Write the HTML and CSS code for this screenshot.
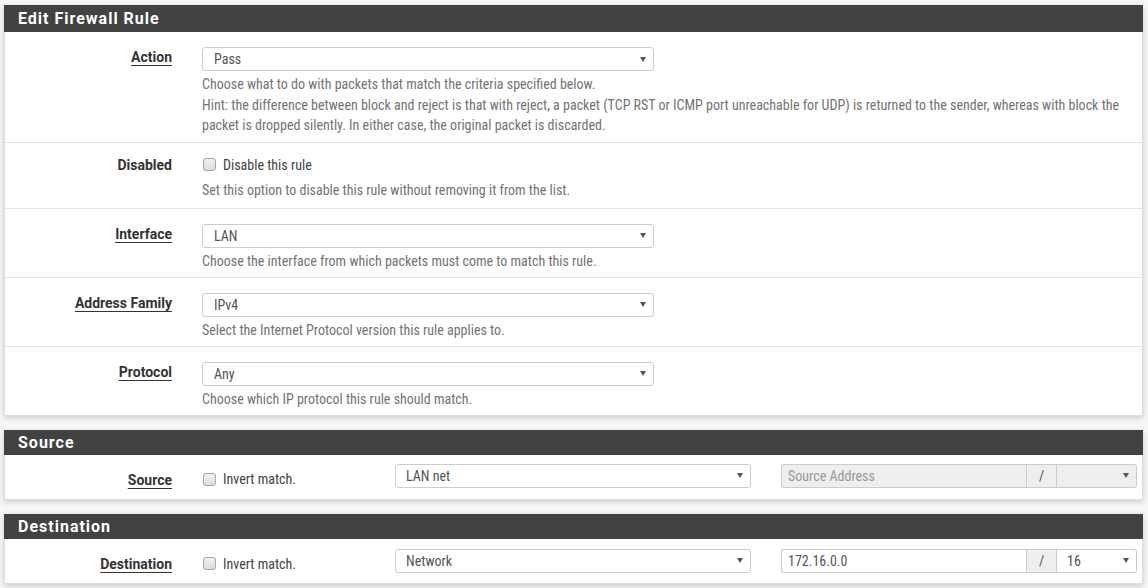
FILE: index.html
```html
<!DOCTYPE html>
<html>
<head>
<meta charset="utf-8">
<link rel="stylesheet" href="styles.css">
</head>
<body>
<div class="panel">
  <div class="panel-heading">Edit Firewall Rule</div>
  <div class="panel-body">
    <div class="row row-first">
      <div class="lbl"><span class="u">Action</span></div>
      <div class="ctl">
        <div class="sel wide"><span>Pass</span><svg class="caret" width="6" height="5" viewBox="0 0 6 5"><path d="M0 0 H6 L3 5 Z" fill="#555"/></svg></div>
        <div class="help l3">Choose what to do with packets that match the criteria specified below.<br>Hint: the difference between block and reject is that with reject, a packet (TCP RST or ICMP port unreachable for UDP) is returned to the sender, whereas with block the packet is dropped silently. In either case, the original packet is discarded.</div>
      </div>
    </div>
    <div class="row row-check">
      <div class="lbl"><span>Disabled</span></div>
      <div class="ctl">
        <div class="chk-line"><span class="cb"></span><span>Disable this rule</span></div>
        <div class="help">Set this option to disable this rule without removing it from the list.</div>
      </div>
    </div>
    <div class="row">
      <div class="lbl"><span class="u">Interface</span></div>
      <div class="ctl">
        <div class="sel wide"><span>LAN</span><svg class="caret" width="6" height="5" viewBox="0 0 6 5"><path d="M0 0 H6 L3 5 Z" fill="#555"/></svg></div>
        <div class="help">Choose the interface from which packets must come to match this rule.</div>
      </div>
    </div>
    <div class="row">
      <div class="lbl"><span class="u">Address Family</span></div>
      <div class="ctl">
        <div class="sel wide"><span>IPv4</span><svg class="caret" width="6" height="5" viewBox="0 0 6 5"><path d="M0 0 H6 L3 5 Z" fill="#555"/></svg></div>
        <div class="help">Select the Internet Protocol version this rule applies to.</div>
      </div>
    </div>
    <div class="row">
      <div class="lbl"><span class="u">Protocol</span></div>
      <div class="ctl">
        <div class="sel wide"><span>Any</span><svg class="caret" width="6" height="5" viewBox="0 0 6 5"><path d="M0 0 H6 L3 5 Z" fill="#555"/></svg></div>
        <div class="help">Choose which IP protocol this rule should match.</div>
      </div>
    </div>
  </div>
</div>

<div class="panel">
  <div class="panel-heading">Source</div>
  <div class="panel-body">
    <div class="row row-addr">
      <div class="lbl"><span class="u">Source</span></div>
      <div class="inv"><span class="cb"></span><span>Invert match.</span></div>
      <div class="sel mid"><span>LAN net</span><svg class="caret" width="6" height="5" viewBox="0 0 6 5"><path d="M0 0 H6 L3 5 Z" fill="#555"/></svg></div>
      <div class="igroup disabled">
        <div class="ig-input ph">Source Address</div>
        <div class="ig-addon">/</div>
        <div class="ig-sel"><span></span><svg class="caret" width="6" height="5" viewBox="0 0 6 5"><path d="M0 0 H6 L3 5 Z" fill="#555"/></svg></div>
      </div>
    </div>
  </div>
</div>

<div class="panel">
  <div class="panel-heading">Destination</div>
  <div class="panel-body">
    <div class="row row-addr row-dest">
      <div class="lbl"><span class="u">Destination</span></div>
      <div class="inv"><span class="cb"></span><span>Invert match.</span></div>
      <div class="sel mid"><span>Network</span><svg class="caret" width="6" height="5" viewBox="0 0 6 5"><path d="M0 0 H6 L3 5 Z" fill="#555"/></svg></div>
      <div class="igroup">
        <div class="ig-input">172.16.0.0</div>
        <div class="ig-addon">/</div>
        <div class="ig-sel"><span>16</span><svg class="caret" width="6" height="5" viewBox="0 0 6 5"><path d="M0 0 H6 L3 5 Z" fill="#555"/></svg></div>
      </div>
    </div>
  </div>
</div>
</body>
</html>
```

FILE: styles.css
```css
html, body {
  margin: 0;
  padding: 0;
}
body {
  background: #f7f7f7;
  padding: 5px 5px 0 4px;
  font-family: "Roboto Condensed", Roboto, "Liberation Sans", sans-serif;
  font-stretch: 80%;
  font-size: 14px;
  line-height: 20px;
  color: #333;
}
.panel {
  width: 1139px;
  background: #fff;
  border: 1px solid #ddd;
  border-top: 0;
  box-sizing: border-box;
  box-shadow: 0 2px 6px rgba(0, 0, 0, 0.18);
  margin-bottom: 14px;
}
.panel-heading {
  background: #424242;
  color: #fff;
  height: 27px;
  line-height: 27px;
  padding-left: 14px;
  margin: 0 -1px;
  font-family: Roboto, "Liberation Sans", sans-serif;
  font-stretch: 100%;
  font-weight: bold;
  font-size: 16px;
  letter-spacing: 1px;
}
.panel + .panel .panel-heading {
  height: 25px;
  line-height: 25px;
}
.row {
  display: flex;
  border-top: 1px solid #e3e3e3;
  padding: 15px 0 6px 0;
}
.row-first {
  border-top: 0;
  padding-bottom: 6px;
}
.lbl {
  width: 167px;
  text-align: right;
  font-family: Roboto, "Liberation Sans", sans-serif;
  font-weight: bold;
  font-stretch: 100%;
  color: #333;
  flex: none;
}
.u {
  text-decoration: underline;
  text-underline-offset: 3px;
  text-decoration-thickness: 1px;
}
.ctl {
  margin-left: 30px;
  flex: none;
  width: 930px;
}
.sel {
  box-sizing: border-box;
  height: 24px;
  border: 1px solid #ccc;
  border-radius: 3px;
  display: flex;
  align-items: center;
  justify-content: space-between;
  padding: 0 7px 0 11px;
  color: #555;
  background: #fff;
  flex: none;
}
.sel.wide {
  width: 452px;
}
.sel.mid {
  width: 356px;
  margin-left: 30px;
  padding-left: 10px;
}
.caret {
  display: block;
  flex: none;
}
.help {
  color: #737373;
  margin-top: 3px;
}
.help.l3 {
  line-height: 20.5px;
}
.row-check {
  padding-top: 12px;
  padding-bottom: 8px;
}
.chk-line {
  display: flex;
  align-items: center;
  height: 20px;
  color: #444;
  margin-bottom: 5px;
}
.cb {
  display: inline-block;
  box-sizing: border-box;
  width: 13px;
  height: 13px;
  border: 1px solid #a6a6a6;
  border-radius: 3px;
  background: linear-gradient(#f2f2f2, #dcdcdc);
  margin: 0 7px 0 1px;
  flex: none;
}
.row-addr {
  border-top: 0;
  padding: 9px 0 11px 0;
  align-items: flex-start;
}
.row-dest {
  padding-top: 10px;
  padding-bottom: 10px;
}
.row-addr .lbl {
  box-sizing: border-box;
  height: 24px;
  padding-top: 6px;
}
.row-dest .lbl {
  padding-top: 5px;
}
.inv {
  box-sizing: border-box;
  margin-left: 30px;
  width: 163px;
  flex: none;
  display: flex;
  align-items: center;
  height: 24px;
  padding-top: 7px;
  color: #444;
}
.row-dest .inv {
  padding-top: 6px;
}
.igroup {
  margin-left: 30px;
  width: 356px;
  height: 24px;
  display: flex;
  flex: none;
  color: #555;
}
.ig-input {
  box-sizing: border-box;
  width: 245px;
  height: 24px;
  border: 1px solid #ccc;
  border-right: 0;
  border-radius: 3px 0 0 3px;
  padding-left: 6px;
  line-height: 22px;
  background: #fff;
}
.ig-addon {
  box-sizing: border-box;
  width: 31px;
  height: 24px;
  border: 1px solid #ccc;
  background: #eee;
  text-align: center;
  line-height: 22px;
  color: #555;
}
.ig-sel {
  box-sizing: border-box;
  width: 80px;
  height: 24px;
  border: 1px solid #ccc;
  border-left: 0;
  border-radius: 0 3px 3px 0;
  display: flex;
  align-items: center;
  justify-content: space-between;
  padding: 0 7px 0 10px;
  background: #fff;
}
.igroup.disabled .ig-input,
.igroup.disabled .ig-sel {
  background: #eee;
}
.ph {
  color: #999;
}
```
